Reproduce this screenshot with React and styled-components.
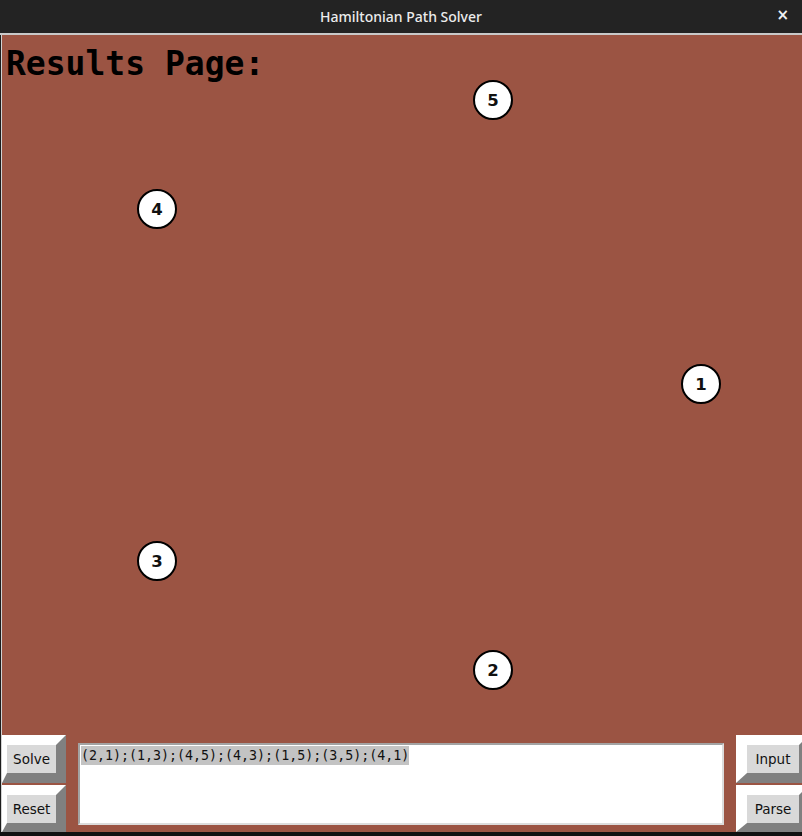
import React from "react";
import styled, { createGlobalStyle } from "styled-components";

const Global = createGlobalStyle`
  html, body { margin: 0; padding: 0; background: #111; }
  #root { width: 802px; height: 836px; }
`;

const Window = styled.div`
  width: 802px;
  height: 836px;
  overflow: hidden;
  display: flex;
  flex-direction: column;
  background: #111;
`;

const TitleBar = styled.div`
  height: 33px;
  flex: none;
  background: #232323;
  border-bottom: 2px solid #c9c9c9;
  display: flex;
  align-items: center;
  justify-content: center;
  position: relative;
  font-family: "Noto Sans", sans-serif;
  font-size: 14px;
  font-weight: 500;
  color: #ececec;
`;

const Close = styled.span`
  position: absolute;
  right: 13px;
  top: 6px;
  font-family: "DejaVu Sans", sans-serif;
  font-size: 15px;
  font-weight: bold;
  color: #f2f2f2;
`;

const Body = styled.div`
  flex: none;
  height: 797px;
  display: flex;
  flex-direction: column;
  border-left: 1px solid #1c1c1c;
`;

const Inner = styled.div`
  flex: 1;
  display: flex;
  flex-direction: column;
  border-left: 1px solid #d2d2d2;
  background: #9b5443;
`;

const Canvas = styled.div`
  position: relative;
  height: 698px;
  flex: none;
  padding: 9px 0 0 4px;
  box-sizing: border-box;
`;

const Heading = styled.h1`
  margin: 0;
  font-family: "DejaVu Sans Mono", monospace;
  font-size: 33px;
  font-weight: bold;
  line-height: normal;
  color: #000;
`;

const Node = styled.div`
  position: absolute;
  width: 40px;
  height: 40px;
  box-sizing: border-box;
  border: 2.5px solid #000;
  border-radius: 50%;
  background: #fff;
  display: flex;
  align-items: center;
  justify-content: center;
  font-family: "DejaVu Sans", sans-serif;
  font-weight: bold;
  font-size: 16.5px;
  color: #111;
`;

const Panel = styled.div`
  flex: none;
  height: 99px;
  display: flex;
  padding-top: 2px;
  box-sizing: border-box;
  gap: 12px;
`;

const ButtonColumn = styled.div`
  display: flex;
  flex-direction: column;
  gap: 2px;
  flex: none;
  width: ${(p) => p.$w}px;
`;

const Button = styled.button`
  box-sizing: border-box;
  width: 100%;
  height: ${(p) => p.$h}px;
  margin: 0;
  padding: 0;
  background: #d9d9d9;
  border-style: solid;
  border-top: 10px solid #ffffff;
  border-left: ${(p) => p.$left}px solid #ffffff;
  border-right: 10px solid #808080;
  border-bottom: ${(p) => p.$bottom}px solid #808080;
  font-family: "DejaVu Sans", sans-serif;
  font-size: 13.5px;
  color: #111;
  display: flex;
  align-items: center;
  justify-content: center;
  cursor: pointer;
`;

const TextArea = styled.div`
  flex: none;
  width: 646px;
  height: 82px;
  margin-top: 8px;
  box-sizing: border-box;
  background: #fff;
  border-top: 2px solid #a3a3a3;
  border-left: 2px solid #a3a3a3;
  border-right: 2px solid #dcdcdc;
  border-bottom: 2px solid #dcdcdc;
  padding: 1px;
`;

const Selected = styled.span`
  display: inline-block;
  background: #c3c3c3;
  font-family: "DejaVu Sans Mono", monospace;
  font-size: 13.3px;
  line-height: 19px;
  color: #111;
`;

const BottomStrip = styled.div`
  flex: 1;
  background: #111;
`;

const nodes = [
  { n: 5, x: 493, y: 100 },
  { n: 4, x: 157, y: 209 },
  { n: 1, x: 701, y: 384 },
  { n: 3, x: 157, y: 561 },
  { n: 2, x: 493, y: 670 },
];

export default function App() {
  return (
    <>
      <Global />
      <Window>
        <TitleBar>
          Hamiltonian Path Solver
          <Close>×</Close>
        </TitleBar>
        <Body>
          <Inner>
            <Canvas>
              <Heading>Results Page:</Heading>
              {nodes.map((d) => (
                <Node key={d.n} style={{ left: d.x - 2 - 20, top: d.y - 35 - 20 }}>
                  {d.n}
                </Node>
              ))}
            </Canvas>
            <Panel>
              <ButtonColumn $w={64}>
                <Button $h={48} $left={5} $bottom={10}>Solve</Button>
                <Button $h={47} $left={5} $bottom={9}>Reset</Button>
              </ButtonColumn>
              <TextArea>
                <Selected>(2,1);(1,3);(4,5);(4,3);(1,5);(3,5);(4,1)</Selected>
              </TextArea>
              <ButtonColumn $w={73}>
                <Button $h={48} $left={11} $bottom={10}>Input</Button>
                <Button $h={47} $left={11} $bottom={9}>Parse</Button>
              </ButtonColumn>
            </Panel>
          </Inner>
          <BottomStrip />
        </Body>
      </Window>
    </>
  );
}
